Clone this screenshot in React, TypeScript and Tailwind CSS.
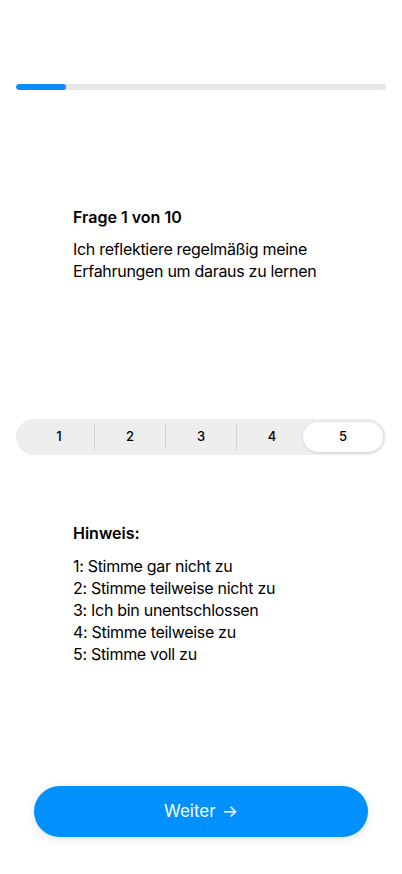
const options = [1, 2, 3, 4, 5];
const selected = 5;

const legend = [
  "1: Stimme gar nicht zu",
  "2: Stimme teilweise nicht zu",
  "3: Ich bin unentschlossen",
  "4: Stimme teilweise zu",
  "5: Stimme voll zu",
];

export default function App() {
  return (
    <div className="h-[874px] bg-white flex flex-col text-black font-['Inter','Liberation_Sans',sans-serif]">
      {/* progress */}
      <div className="mt-[84px] mx-4 h-[6px] rounded-full bg-[#e6e6e6] overflow-hidden">
        <div className="h-full w-[50px] rounded-full bg-[#0a8cff]" />
      </div>

      {/* question */}
      <div className="mt-[116px] px-[73px]">
        <div className="text-[16px] leading-[22px] font-semibold">Frage 1 von 10</div>
        <p className="mt-[10px] text-[16px] leading-[22px] tracking-[-0.3px]">
          Ich reflektiere regelmäßig meine Erfahrungen um daraus zu lernen
        </p>
      </div>

      {/* segmented control */}
      <div className="mt-[137px] mx-4 h-9 rounded-full bg-[#eeeeee] px-[7.5px] py-[3px] flex">
        {options.map((n, i) => {
          const active = n === selected;
          const showDivider = i < options.length - 1 && n + 1 !== selected && !active;
          return (
            <div key={n} className="relative flex-1 flex items-center justify-center">
              {active && (
                <div className="absolute inset-y-0 -left-[4.5px] -right-[4.5px] rounded-full bg-white shadow-[0_0_0_1px_rgba(0,0,0,0.03),0_1px_3px_rgba(0,0,0,0.08)]" />
              )}
              <span className="relative text-[13px] font-medium">{n}</span>
              {showDivider && (
                <div className="absolute right-0 top-[1px] bottom-[2px] w-px bg-[#d4d4d4]" />
              )}
            </div>
          );
        })}
      </div>

      {/* legend */}
      <div className="mt-[67px] px-[73px]">
        <div className="text-[16px] leading-[22px] font-semibold">Hinweis:</div>
        <ul className="mt-[11px] text-[16px] leading-[22px] tracking-[-0.3px]">
          {legend.map((l) => (
            <li key={l}>{l}</li>
          ))}
        </ul>
      </div>

      {/* next */}
      <div className="mt-[121px] px-[34px]">
        <button className="w-full h-[51px] rounded-full bg-[#0091ff] text-white text-[17px] shadow-[0_2px_8px_rgba(0,0,0,0.12)] flex items-center justify-center gap-[6px]">
          Weiter <span>→</span>
        </button>
      </div>
    </div>
  );
}
